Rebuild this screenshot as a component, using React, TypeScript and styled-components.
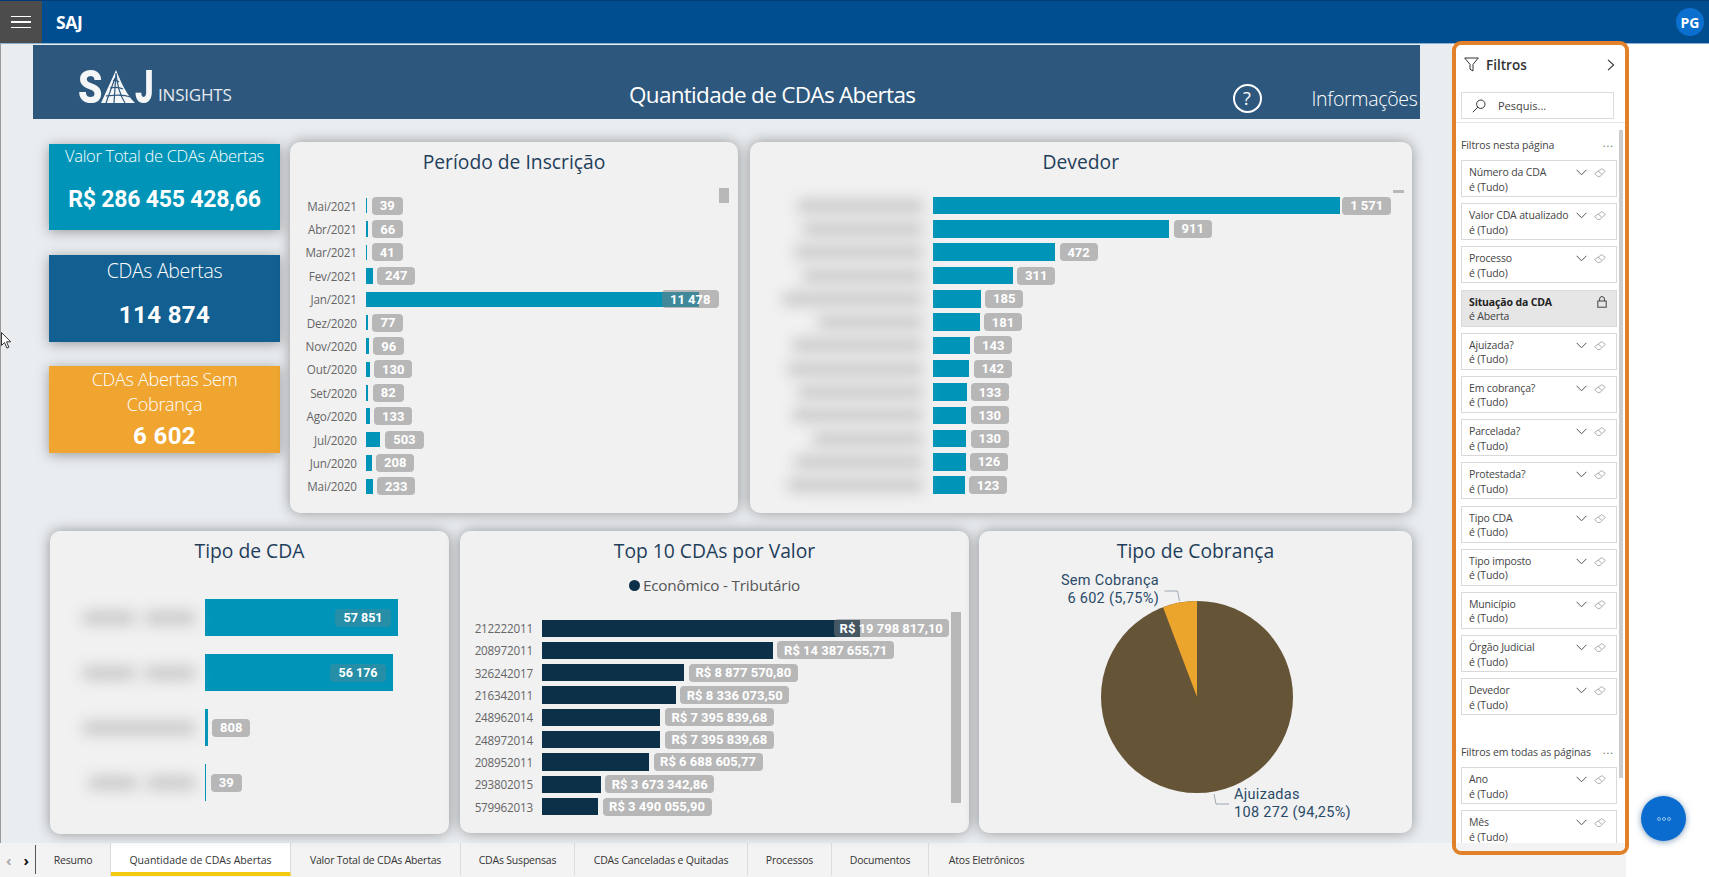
import styled, { createGlobalStyle } from "styled-components";

const GlobalStyle = createGlobalStyle`
  html, body {
    margin: 0;
    padding: 0;
    background: #ffffff;
    overflow: hidden;
  }
  * { box-sizing: border-box; }
  body { font-family: "Open Sans", "Noto Sans", sans-serif; }
`;

// dados

const periodo = [
  { label: "Mai/2021", w: 1.5, value: "39", pill: 31 },
  { label: "Abr/2021", w: 2, value: "66", pill: 31 },
  { label: "Mar/2021", w: 1.5, value: "41", pill: 31 },
  { label: "Fev/2021", w: 7, value: "247", pill: 38 },
  { label: "Jan/2021", w: 333, value: "11 478", pill: 57, over: 37 },
  { label: "Dez/2020", w: 2.3, value: "77", pill: 31 },
  { label: "Nov/2020", w: 3, value: "96", pill: 31 },
  { label: "Out/2020", w: 4, value: "130", pill: 38 },
  { label: "Set/2020", w: 2.5, value: "82", pill: 31 },
  { label: "Ago/2020", w: 4, value: "133", pill: 38 },
  { label: "Jul/2020", w: 14.7, value: "503", pill: 39 },
  { label: "Jun/2020", w: 6, value: "208", pill: 38 },
  { label: "Mai/2020", w: 7, value: "233", pill: 38 },
];

const devedor = [
  { blur: 125, w: 407.7, value: "1 571", pill: 49, over: -2 },
  { blur: 120, w: 236.7, value: "911", pill: 38 },
  { blur: 128, w: 122.6, value: "472", pill: 38 },
  { blur: 120, w: 80.3, value: "311", pill: 38 },
  { blur: 140, w: 48.3, value: "185", pill: 38 },
  { blur: 105, w: 47, value: "181", pill: 38 },
  { blur: 130, w: 37.2, value: "143", pill: 38 },
  { blur: 135, w: 36.8, value: "142", pill: 38 },
  { blur: 125, w: 34, value: "133", pill: 38 },
  { blur: 130, w: 33.8, value: "130", pill: 38 },
  { blur: 110, w: 33.8, value: "130", pill: 38 },
  { blur: 128, w: 33, value: "126", pill: 38 },
  { blur: 135, w: 32, value: "123", pill: 38 },
];

const tipoCda = [
  { blobs: [52, 50], w: 193, value: "57 851", pill: 56, inside: true },
  { blobs: [52, 50], w: 188, value: "56 176", pill: 56, inside: true },
  { blobs: [112], w: 2.7, value: "808", pill: 38 },
  { blobs: [48, 48], w: 1.3, value: "39", pill: 31 },
];

const top10 = [
  { label: "212222011", w: 317.7, value: "R$ 19 798 817,10", pill: 115, over: 26 },
  { label: "208972011", w: 230.7, value: "R$ 14 387 655,71", pill: 117 },
  { label: "326242017", w: 142.3, value: "R$ 8 877 570,80", pill: 109 },
  { label: "216342011", w: 133.7, value: "R$ 8 336 073,50", pill: 109 },
  { label: "248962014", w: 118.3, value: "R$ 7 395 839,68", pill: 109 },
  { label: "248972014", w: 118.3, value: "R$ 7 395 839,68", pill: 109 },
  { label: "208952011", w: 107, value: "R$ 6 688 605,77", pill: 109 },
  { label: "293802015", w: 58.7, value: "R$ 3 673 342,86", pill: 109 },
  { label: "579962013", w: 56, value: "R$ 3 490 055,90", pill: 109 },
];

const filtrosPagina = [
  { name: "Número da CDA", value: "é (Tudo)" },
  { name: "Valor CDA atualizado", value: "é (Tudo)" },
  { name: "Processo", value: "é (Tudo)" },
  { name: "Situação da CDA", value: "é Aberta", locked: true },
  { name: "Ajuizada?", value: "é (Tudo)" },
  { name: "Em cobrança?", value: "é (Tudo)" },
  { name: "Parcelada?", value: "é (Tudo)" },
  { name: "Protestada?", value: "é (Tudo)" },
  { name: "Tipo CDA", value: "é (Tudo)" },
  { name: "Tipo imposto", value: "é (Tudo)" },
  { name: "Município", value: "é (Tudo)" },
  { name: "Órgão Judicial", value: "é (Tudo)" },
  { name: "Devedor", value: "é (Tudo)" },
];

const filtrosTodas = [
  { name: "Ano", value: "é (Tudo)" },
  { name: "Mês", value: "é (Tudo)" },
];

const tabs = [
  { name: "Resumo", w: 75 },
  { name: "Quantidade de CDAs Abertas", w: 180, active: true },
  { name: "Valor Total de CDAs Abertas", w: 170 },
  { name: "CDAs Suspensas", w: 114 },
  { name: "CDAs Canceladas e Quitadas", w: 173 },
  { name: "Processos", w: 84 },
  { name: "Documentos", w: 97 },
  { name: "Atos Eletrônicos", w: 115 },
];

// ícones

const FunnelIcon = () => (
  <svg width="15" height="15" viewBox="0 0 15 15" fill="none" stroke="#333" strokeWidth="1">
    <path d="M0.7 1h13.6L9 7.4V14l-3-1.8V7.4z" />
  </svg>
);

const ChevronRight = () => (
  <svg width="8" height="12" viewBox="0 0 8 12" fill="none" stroke="#333" strokeWidth="1.1">
    <path d="M1 0.8L6.6 6 1 11.2" />
  </svg>
);

const SearchIcon = () => (
  <svg width="14" height="14" viewBox="0 0 14 14" fill="none" stroke="#333" strokeWidth="1">
    <circle cx="8.8" cy="5.2" r="4.2" />
    <path d="M5.8 8.2L0.8 13.2" />
  </svg>
);

const ChevronDown = () => (
  <svg width="11" height="7" viewBox="0 0 11 7" fill="none" stroke="#555" strokeWidth="1">
    <path d="M0.6 0.8L5.5 5.8 10.4 0.8" />
  </svg>
);

const EraserIcon = () => (
  <svg width="12" height="9" viewBox="0 0 12 9" fill="none" stroke="#b0b0b0" strokeWidth="1">
    <path d="M7.8 0.6L11.4 3.4 6 8.4H3.6L0.6 5.6z" />
    <path d="M4.2 3.2l3.6 3" />
  </svg>
);

const LockIcon = () => (
  <svg width="10" height="12" viewBox="0 0 10 12" fill="none" stroke="#444" strokeWidth="1">
    <rect x="0.8" y="5" width="8.4" height="6.2" />
    <path d="M2.6 5V3a2.4 2.4 0 0 1 4.8 0v2" />
  </svg>
);

const LogoA = () => (
  <svg width="34" height="34" viewBox="0 0 34 34">
    <path d="M15 0C19 10 25 24 34 33H0z" fill="#f4f6f8" />
    <g stroke="#2d577d" strokeWidth="1.2" fill="none">
      <path d="M15 3L13 33M15 3C16 14 19 25 24 33" />
      <path d="M5 26C14 25 22 24 29 27M9 18C14 17 18 17 22 19M12 11C14 10 16 10 18 12" />
      <path d="M14 8L5 33" />
    </g>
  </svg>
);

const CursorIcon = () => (
  <svg width="11" height="18" viewBox="0 0 11 18">
    <path d="M0.5 0.5v13l3-3 2.4 5.6 2-0.9-2.4-5.4h4.2z" fill="#fff" stroke="#222" strokeWidth="0.9" />
  </svg>
);

// componentes

function HBarRow({ w, value, pill, over, color, height }: {
  w: number; value: string; pill: number; over?: number; color: string; height: number;
}) {
  return (
    <>
      <Bar $w={w} $h={height} $color={color} />
      <Pill $w={pill} $over={over}>{value}</Pill>
    </>
  );
}

function FilterCard({ name, value, locked }: { name: string; value: string; locked?: boolean }) {
  return (
    <FilterBox $locked={locked}>
      <FilterText>
        <FilterName $locked={locked}>{name}</FilterName>
        <FilterValue>{value}</FilterValue>
      </FilterText>
      {locked ? (
        <LockSlot><LockIcon /></LockSlot>
      ) : (
        <FilterActions>
          <ChevronDown />
          <EraserIcon />
        </FilterActions>
      )}
    </FilterBox>
  );
}

export default function App() {
  return (
    <Page>
      <GlobalStyle />
      <TopBar>
        <MenuButton>
          <MenuLine />
          <MenuLine />
          <MenuLine />
        </MenuButton>
        <Brand>SAJ</Brand>
        <Avatar>PG</Avatar>
      </TopBar>

      <Main>
        <Report>
          <Cursor><CursorIcon /></Cursor>
          <Banner>
            <Logo>
              <LogoLetter $w={23} $sx={0.85}>S</LogoLetter>
              <LogoA />
              <LogoLetter $w={18} $sx={0.72}>J</LogoLetter>
              <LogoWord>INSIGHTS</LogoWord>
            </Logo>
            <BannerTitle>Quantidade de CDAs Abertas</BannerTitle>
            <HelpCircle>?</HelpCircle>
            <BannerInfo>Informações</BannerInfo>
          </Banner>

          <TopRow>
            <KpiColumn>
              <Kpi $bg="#0095b8" $h={86} $top={1} $gap={19}>
                <KpiTitle $size={16.5} $lh={21}>Valor Total de CDAs Abertas</KpiTitle>
                <KpiValue $small>R$ 286 455 428,66</KpiValue>
              </Kpi>
              <Kpi $bg="#125f92" $h={87} $top={3} $gap={17}>
                <KpiTitle $size={19.5} $lh={25}>CDAs Abertas</KpiTitle>
                <KpiValue>114 874</KpiValue>
              </Kpi>
              <Kpi $bg="#efa52f" $h={87} $top={1} $gap={4}>
                <KpiTitle $size={18} $lh={25}>CDAs Abertas Sem<br />Cobrança</KpiTitle>
                <KpiValue>6 602</KpiValue>
              </Kpi>
            </KpiColumn>

            <PeriodCard>
              <CardTitle>Período de Inscrição</CardTitle>
              <ScrollThumb $right={9} $top={46} $w={10} $h={15} />
              <RowList $top={18}>
                {periodo.map((r, i) => (
                  <ChartRow key={i} $h={23.4}>
                    <RowLabel $w={75.7}>{r.label}</RowLabel>
                    <HBarRow w={r.w} value={r.value} pill={r.pill} over={r.over} color="#0095b8" height={15.5} />
                  </ChartRow>
                ))}
              </RowList>
            </PeriodCard>

            <DebtorCard>
              <CardTitle>Devedor</CardTitle>
              <ScrollThumb $right={8} $top={48} $w={11} $h={3} />
              <RowList $top={18}>
                {devedor.map((r, i) => (
                  <ChartRow key={i} $h={23.3}>
                    <BlurCell $w={182.5}>
                      <BlurBlob $w={r.blur} />
                    </BlurCell>
                    <HBarRow w={r.w} value={r.value} pill={r.pill} over={r.over} color="#0095b8" height={17.5} />
                  </ChartRow>
                ))}
              </RowList>
            </DebtorCard>
          </TopRow>

          <BottomRow>
            <TypeCard>
              <CardTitle>Tipo de CDA</CardTitle>
              <TypeRows>
                {tipoCda.map((r, i) => (
                  <TypeRow key={i}>
                    <BlurCell $w={155}>
                      {r.blobs.map((b, j) => <BlurBlob key={j} $w={b} />)}
                    </BlurCell>
                    {r.inside ? (
                      <TypeBarFull $w={r.w}>
                        <InsidePill>{r.value}</InsidePill>
                      </TypeBarFull>
                    ) : (
                      <HBarRow w={r.w} value={r.value} pill={r.pill} color="#0095b8" height={37} />
                    )}
                  </TypeRow>
                ))}
              </TypeRows>
            </TypeCard>

            <TopTenCard>
              <CardTitle>Top 10 CDAs por Valor</CardTitle>
              <Legend><LegendDot />Econômico - Tributário</Legend>
              <ScrollThumb $right={8} $top={81} $w={10} $h={191} />
              <RowList $top={21}>
                {top10.map((r, i) => (
                  <ChartRow key={i} $h={22.3}>
                    <RowLabel $w={82}>{r.label}</RowLabel>
                    <HBarRow w={r.w} value={r.value} pill={r.pill} over={r.over} color="#0b3048" height={17.3} />
                  </ChartRow>
                ))}
              </RowList>
            </TopTenCard>

            <PieCard>
              <CardTitle>Tipo de Cobrança</CardTitle>
              <PieSvg width="194" height="194" viewBox="0 0 194 194">
                <circle cx="97" cy="97" r="96" fill="#655436" />
                <path d="M97 97L63 7.2A96 96 0 0 1 97 1z" fill="#eba42c" />
                <path d="M64.5 -9h13l2 10" fill="none" stroke="#8a96a3" strokeWidth="0.8" />
                <path d="M114 194l2 10h13" fill="none" stroke="#8a96a3" strokeWidth="0.8" />
              </PieSvg>
              <PieLabelLeft>Sem Cobrança<br />6 602 (5,75%)</PieLabelLeft>
              <PieLabelRight>Ajuizadas<br />108 272 (94,25%)</PieLabelRight>
            </PieCard>
          </BottomRow>
        </Report>

        <FilterPane>
          <PaneHeader>
            <FunnelIcon />
            <PaneTitle>Filtros</PaneTitle>
            <PaneChevron><ChevronRight /></PaneChevron>
          </PaneHeader>
          <SearchBox>
            <SearchIcon />
            <SearchText>Pesquis...</SearchText>
          </SearchBox>
          <PaneList>
            <PaneScroll />
            <SectionHead>
              <span>Filtros nesta página</span>
              <SectionDots>...</SectionDots>
            </SectionHead>
            <FilterStack>
              {filtrosPagina.map((f) => (
                <FilterCard key={f.name} name={f.name} value={f.value} locked={f.locked} />
              ))}
            </FilterStack>
            <SectionHead $gap={29}>
              <span>Filtros em todas as páginas</span>
              <SectionDots>...</SectionDots>
            </SectionHead>
            <FilterStack>
              {filtrosTodas.map((f) => (
                <FilterCard key={f.name} name={f.name} value={f.value} />
              ))}
            </FilterStack>
          </PaneList>
          <PaneFooter />
        </FilterPane>
      </Main>

      <TabBar>
        <TabNav>
          <NavArrow $off>‹</NavArrow>
          <NavArrow>›</NavArrow>
        </TabNav>
        {tabs.map((t) => (
          <Tab key={t.name} $w={t.w} $active={t.active}>{t.name}</Tab>
        ))}
      </TabBar>

      <Fab>
        <FabDot /><FabDot /><FabDot />
      </Fab>
    </Page>
  );
}

// estilos

const Page = styled.div`
  position: relative;
  width: 1709px;
  height: 877px;
  display: flex;
  flex-direction: column;
  overflow: hidden;
`;

const TopBar = styled.header`
  height: 44px;
  flex-shrink: 0;
  display: flex;
  align-items: center;
  background: #004e90;
  border-top: 1px solid #003a78;
  border-bottom: 1px solid #8ab0d2;
`;

const MenuButton = styled.div`
  width: 42px;
  height: 100%;
  background: #4c4c4c;
  display: flex;
  flex-direction: column;
  align-items: center;
  justify-content: center;
  gap: 4px;
`;

const MenuLine = styled.span`
  width: 20px;
  height: 1.5px;
  background: #ffffff;
`;

const Brand = styled.div`
  margin-left: 14px;
  color: #ffffff;
  font-family: "Open Sans", sans-serif;
  font-size: 17.5px;
  font-weight: 700;
  letter-spacing: -0.3px;
`;

const Avatar = styled.div`
  margin-left: auto;
  margin-right: 5px;
  width: 28px;
  height: 28px;
  border-radius: 50%;
  background: #0b6fd0;
  color: #ffffff;
  display: flex;
  align-items: center;
  justify-content: center;
  font-size: 14px;
  font-weight: 700;
`;

const Main = styled.div`
  flex: 1;
  min-height: 0;
  display: flex;
  align-items: flex-start;
`;

const Report = styled.main`
  position: relative;
  width: 1452px;
  height: 100%;
  flex-shrink: 0;
  padding-top: 1px;
  background: #eaedf0;
  border-left: 1px solid #9a9a9a;
`;

const Cursor = styled.div`
  position: absolute;
  left: 0;
  top: 288px;
  line-height: 0;
`;

const Banner = styled.div`
  margin-left: 32px;
  width: 1387px;
  height: 74px;
  display: flex;
  align-items: center;
  background: #2d577d;
  color: #ffffff;
`;

const Logo = styled.div`
  width: 190px;
  flex-shrink: 0;
  margin-left: 45px;
  display: flex;
  align-items: flex-end;
  height: 34px;
  margin-top: 9px;
`;

const LogoLetter = styled.span<{ $w: number; $sx: number }>`
  display: inline-block;
  width: ${(p) => p.$w}px;
  font-family: Roboto, sans-serif;
  font-weight: 900;
  font-size: 46px;
  line-height: 34px;
  color: #f4f6f8;
  transform: scaleX(${(p) => p.$sx});
  transform-origin: left center;
`;

const LogoWord = styled.span`
  margin-left: 5px;
  font-family: "Open Sans", sans-serif;
  font-size: 17px;
  line-height: 19px;
  letter-spacing: -0.2px;
  color: #e6ebf0;
`;

const BannerTitle = styled.div`
  margin-left: 361px;
  width: 400px;
  flex-shrink: 0;
  margin-top: 25px;
  font-size: 22.5px;
  letter-spacing: -0.7px;
  white-space: nowrap;
`;

const HelpCircle = styled.div`
  margin-left: 203.5px;
  margin-top: 32px;
  width: 29px;
  height: 29px;
  flex-shrink: 0;
  border: 2px solid #ffffff;
  border-radius: 50%;
  display: flex;
  align-items: center;
  justify-content: center;
  font-size: 18px;
`;

const BannerInfo = styled.div`
  margin-left: 50px;
  margin-top: 32px;
  font-size: 19.5px;
  font-weight: 300;
  letter-spacing: -0.3px;
  white-space: nowrap;
`;

const TopRow = styled.div`
  margin-top: 23px;
  margin-left: 48px;
  display: flex;
  align-items: flex-start;
`;

const KpiColumn = styled.div`
  width: 231px;
  padding-top: 2px;
  display: flex;
  flex-direction: column;
  gap: 24.5px;
`;

const Kpi = styled.div<{ $bg: string; $h: number; $top: number; $gap: number }>`
  height: ${(p) => p.$h}px;
  padding-top: ${(p) => p.$top}px;
  background: ${(p) => p.$bg};
  color: #ffffff;
  display: flex;
  flex-direction: column;
  align-items: center;
  text-align: center;
  box-shadow: 0 2px 12px rgba(0, 0, 0, 0.35);
  & > :last-child { margin-top: ${(p) => p.$gap}px; }
`;

const KpiTitle = styled.div<{ $size: number; $lh: number }>`
  font-size: ${(p) => p.$size}px;
  font-weight: 300;
  line-height: ${(p) => p.$lh}px;
  letter-spacing: -0.3px;
  white-space: nowrap;
`;

const KpiValue = styled.div<{ $small?: boolean }>`
  font-family: Roboto, sans-serif;
  font-size: ${(p) => (p.$small ? 23 : 24)}px;
  font-weight: 700;
  line-height: 30px;
  letter-spacing: ${(p) => (p.$small ? -0.2 : 0.4)}px;
  white-space: nowrap;
`;

const Card = styled.section`
  position: relative;
  flex-shrink: 0;
  background: #f1f1f2;
  border-radius: 10px;
  box-shadow: 0 0 14px rgba(0, 0, 0, 0.38);
`;

const PeriodCard = styled(Card)`
  margin-left: 10px;
  width: 448px;
  height: 371px;
`;

const DebtorCard = styled(Card)`
  margin-left: 12px;
  width: 661.5px;
  height: 371px;
`;

const CardTitle = styled.h2`
  margin: 0;
  padding-top: 6px;
  text-align: center;
  color: #1f3e5a;
  font-size: 19.3px;
  font-weight: 400;
  line-height: 28px;
`;

const ScrollThumb = styled.div<{ $right: number; $top: number; $w: number; $h: number }>`
  position: absolute;
  right: ${(p) => p.$right}px;
  top: ${(p) => p.$top}px;
  width: ${(p) => p.$w}px;
  height: ${(p) => p.$h}px;
  background: #b8b8b8;
`;

const RowList = styled.div<{ $top: number }>`
  margin-top: ${(p) => p.$top}px;
`;

const ChartRow = styled.div<{ $h: number }>`
  height: ${(p) => p.$h}px;
  display: flex;
  align-items: center;
`;

const RowLabel = styled.div<{ $w: number }>`
  width: ${(p) => p.$w}px;
  flex-shrink: 0;
  padding-right: 9px;
  text-align: right;
  color: #666;
  font-size: 11.7px;
  letter-spacing: -0.2px;
  white-space: nowrap;
`;

const Bar = styled.div<{ $w: number; $h: number; $color: string }>`
  width: ${(p) => p.$w}px;
  height: ${(p) => p.$h}px;
  flex-shrink: 0;
  background: ${(p) => p.$color};
`;

const Pill = styled.span<{ $w: number; $over?: number }>`
  width: ${(p) => p.$w}px;
  height: 18px;
  flex-shrink: 0;
  margin-left: ${(p) => (p.$over ? -p.$over : 4.5)}px;
  position: relative;
  border-radius: 4px;
  background: rgba(125, 125, 125, 0.5);
  color: #ffffff;
  display: flex;
  align-items: center;
  justify-content: center;
  font-family: Roboto, sans-serif;
  font-size: 13px;
  font-weight: 700;
  white-space: nowrap;
`;

const BlurCell = styled.div<{ $w: number }>`
  width: ${(p) => p.$w}px;
  flex-shrink: 0;
  padding-right: 10px;
  display: flex;
  justify-content: flex-end;
  gap: 10px;
`;

const BlurBlob = styled.div<{ $w: number }>`
  width: ${(p) => p.$w}px;
  height: 14px;
  background: #cacaca;
  filter: blur(7px);
`;

const BottomRow = styled.div`
  margin-top: 18px;
  margin-left: 49px;
  display: flex;
  align-items: flex-start;
`;

const TypeCard = styled(Card)`
  width: 399px;
  height: 303px;
`;

const TypeRows = styled.div`
  margin-top: 34px;
  display: flex;
  flex-direction: column;
  gap: 18px;
`;

const TypeRow = styled.div`
  height: 37px;
  display: flex;
  align-items: center;
`;

const TypeBarFull = styled.div<{ $w: number }>`
  width: ${(p) => p.$w}px;
  height: 37px;
  padding-right: 7px;
  background: #0095b8;
  display: flex;
  align-items: center;
  justify-content: flex-end;
`;

const InsidePill = styled.span`
  width: 56px;
  height: 18px;
  border-radius: 4px;
  background: rgba(125, 125, 125, 0.3);
  color: #ffffff;
  display: flex;
  align-items: center;
  justify-content: center;
  font-family: Roboto, sans-serif;
  font-size: 12.5px;
  font-weight: 700;
`;

const TopTenCard = styled(Card)`
  margin-left: 11px;
  width: 509px;
  height: 302px;
`;

const Legend = styled.div`
  margin-top: 9px;
  height: 22px;
  display: flex;
  align-items: center;
  justify-content: center;
  gap: 3px;
  color: #555;
  font-size: 15.3px;
  letter-spacing: -0.2px;
`;

const LegendDot = styled.span`
  width: 11px;
  height: 11px;
  border-radius: 50%;
  background: #0b3048;
`;

const PieCard = styled(Card)`
  margin-left: 10px;
  width: 433px;
  height: 302px;
`;

const PieSvg = styled.svg`
  display: block;
  margin: 35px 0 0 120.7px;
  overflow: visible;
`;

const PieLabel = styled.div`
  position: absolute;
  color: #2a4a68;
  font-family: Roboto, sans-serif;
  font-size: 14.5px;
  line-height: 18px;
  letter-spacing: 0.3px;
  white-space: nowrap;
`;

const PieLabelLeft = styled(PieLabel)`
  right: 253px;
  top: 41px;
  text-align: right;
`;

const PieLabelRight = styled(PieLabel)`
  left: 255px;
  top: 255px;
`;

const FilterPane = styled.aside`
  position: relative;
  z-index: 2;
  width: 177px;
  height: 814px;
  flex-shrink: 0;
  margin-top: -3px;
  border: 4px solid #e1822a;
  border-radius: 9px;
  background: #ffffff;
  display: flex;
  flex-direction: column;
  overflow: hidden;
`;

const PaneHeader = styled.div`
  height: 41px;
  padding: 0 10px 2px 8px;
  display: flex;
  align-items: center;
  flex-shrink: 0;
`;

const PaneTitle = styled.div`
  margin-left: 7px;
  color: #333;
  font-size: 13.5px;
  font-weight: 600;
`;

const PaneChevron = styled.div`
  margin-left: auto;
  line-height: 0;
`;

const SearchBox = styled.div`
  margin: 6px 0 0 5px;
  width: 153px;
  height: 27px;
  flex-shrink: 0;
  padding-left: 10px;
  border: 1px solid #dcdcdc;
  display: flex;
  align-items: center;
`;

const SearchText = styled.span`
  margin-left: 12px;
  color: #444;
  font-size: 11px;
`;

const PaneList = styled.div`
  position: relative;
  flex-shrink: 0;
  height: 721px;
  margin-top: 3px;
  padding: 0 0 0 5px;
  border-top: 1px solid #e6e6e6;
  overflow: hidden;
`;

const PaneScroll = styled.div`
  position: absolute;
  right: 2px;
  top: 7px;
  width: 4px;
  height: 648px;
  background: #cccccc;
`;

const SectionHead = styled.div<{ $gap?: number }>`
  width: 156px;
  margin-top: ${(p) => p.$gap ?? 14}px;
  margin-bottom: 7px;
  height: 16px;
  display: flex;
  align-items: center;
  justify-content: space-between;
  color: #444;
  font-size: 10.5px;
  letter-spacing: -0.1px;
  white-space: nowrap;
`;

const SectionDots = styled.span`
  color: #666;
  letter-spacing: 1px;
  margin-top: -4px;
  margin-right: 3px;
`;

const FilterStack = styled.div`
  display: flex;
  flex-direction: column;
  gap: 6.2px;
`;

const FilterBox = styled.div<{ $locked?: boolean }>`
  width: 156px;
  height: 37px;
  flex-shrink: 0;
  padding: 4px 10px 0 7px;
  border: 1px solid #d9d9d9;
  background: ${(p) => (p.$locked ? "#e6e6e6" : "#ffffff")};
  display: flex;
  justify-content: space-between;
  align-items: flex-start;
`;

const FilterText = styled.div`
  font-size: 10.5px;
  line-height: 14.5px;
  color: #444;
  letter-spacing: -0.15px;
  white-space: nowrap;
`;

const FilterName = styled.div<{ $locked?: boolean }>`
  font-weight: ${(p) => (p.$locked ? 700 : 400)};
  color: ${(p) => (p.$locked ? "#222" : "#444")};
`;

const FilterValue = styled.div``;

const FilterActions = styled.div`
  position: absolute;
  margin-left: 107px;
  display: flex;
  align-items: center;
  gap: 7px;
  line-height: 0;
  padding-top: 3px;
`;

const LockSlot = styled.div`
  line-height: 0;
  padding-top: 1px;
  margin-right: -1px;
`;

const PaneFooter = styled.div`
  flex: 1;
  background: #f3f3f3;
`;

const TabBar = styled.nav`
  height: 34px;
  width: 1626px;
  flex-shrink: 0;
  display: flex;
  align-items: flex-start;
  background: #f3f3f3;
`;

const TabNav = styled.div`
  width: 36px;
  height: 29px;
  padding: 0 6px;
  display: flex;
  align-items: center;
  justify-content: space-between;
  border-right: 1px solid #555;
  margin-top: 2px;
`;

const NavArrow = styled.span<{ $off?: boolean }>`
  color: ${(p) => (p.$off ? "#aaa" : "#111")};
  font-size: 15px;
  font-weight: 700;
`;

const Tab = styled.div<{ $w: number; $active?: boolean }>`
  width: ${(p) => p.$w}px;
  height: 33px;
  display: flex;
  align-items: center;
  justify-content: center;
  color: #333;
  font-size: 10.5px;
  letter-spacing: ${(p) => (p.$active ? "0" : "-0.2px")};
  white-space: nowrap;
  border-right: 1px solid #dddddd;
  background: ${(p) => (p.$active ? "#ffffff" : "#f3f3f3")};
  border-bottom: ${(p) => (p.$active ? "4px solid #f2c811" : "0")};
  padding-top: ${(p) => (p.$active ? "4px" : "0")};
  &:last-child { border-right: 0; }
`;

const Fab = styled.div`
  position: absolute;
  left: 1641px;
  top: 796px;
  width: 45px;
  height: 45px;
  border-radius: 50%;
  background: #0a6ccf;
  box-shadow: 0 1px 6px rgba(0, 60, 120, 0.5);
  display: flex;
  align-items: center;
  justify-content: center;
  gap: 1px;
`;

const FabDot = styled.span`
  width: 4px;
  height: 4px;
  border: 1px solid #8fc0ee;
  border-radius: 50%;
`;
